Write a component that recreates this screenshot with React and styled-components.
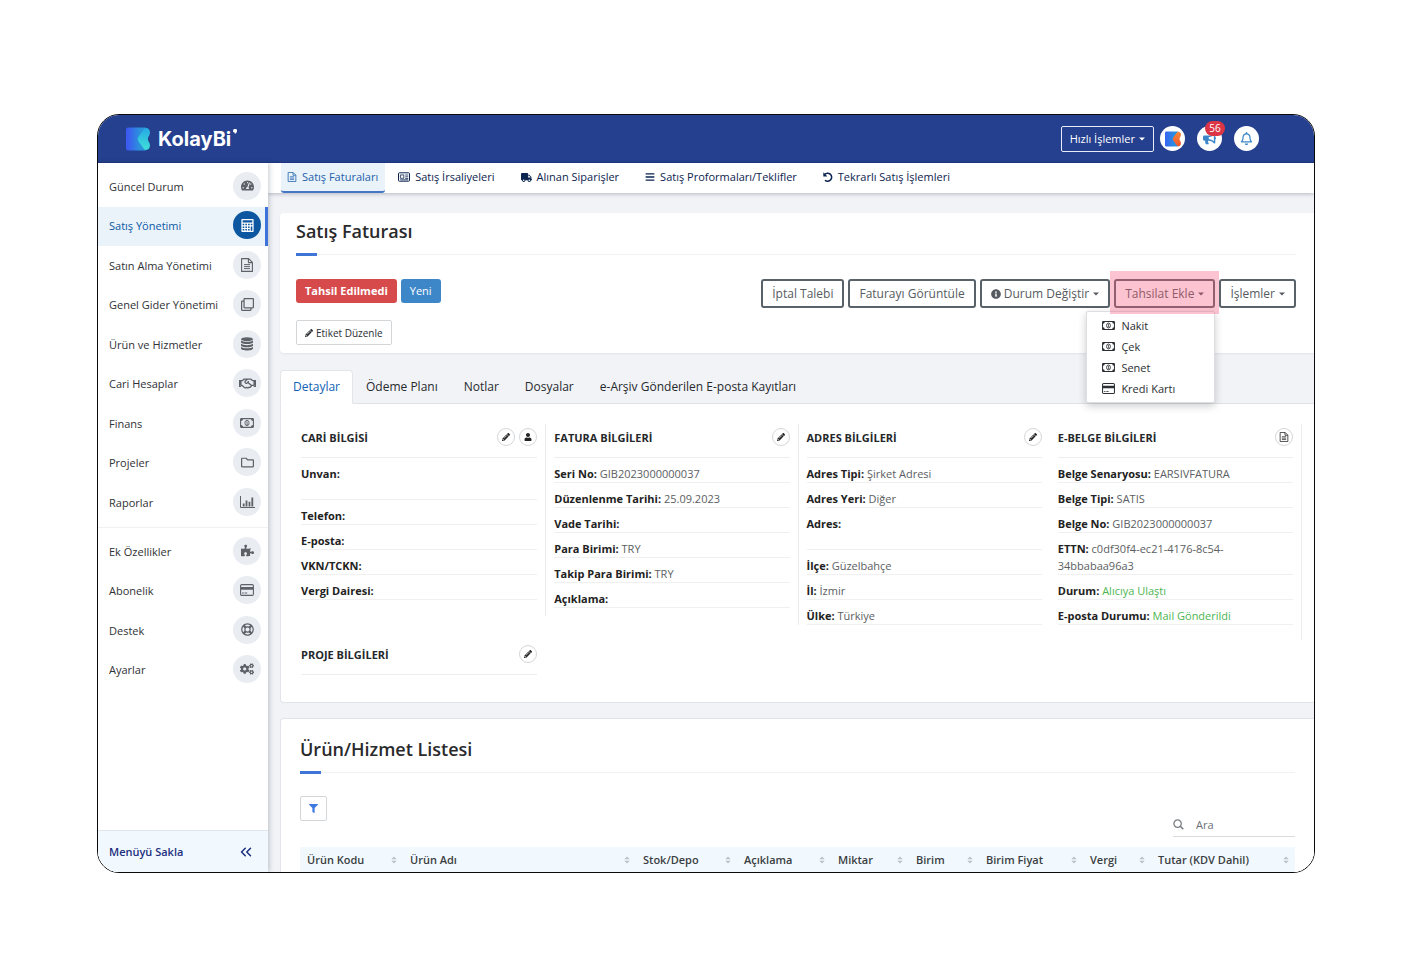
import React from "react";
import styled, { createGlobalStyle, css } from "styled-components";
import {
  FaTachometerAlt, FaRegClone, FaRegHandshake, FaRegFolder,
  FaPuzzlePiece, FaRegLifeRing, FaCogs, FaTruck, FaBars, FaInfoCircle,
  FaBullhorn, FaRegBell, FaFilter, FaPencilAlt, FaUser,
} from "react-icons/fa";
import { ChevronsLeft } from "lucide-react";

const GlobalStyle = createGlobalStyle`
  *, *::before, *::after { box-sizing: border-box; }
  body { margin: 0; background: #fff; color: #2b2f33; font: 11px/16px "Open Sans", "Noto Sans", sans-serif; }
  button, input { font: inherit; color: inherit; }
  button { cursor: pointer; }
  a { color: inherit; text-decoration: none; }
  h1, h2, h3, p, ul, dl, dd, dt { margin: 0; padding: 0; }
  ul { list-style: none; }
  svg { display: block; flex: none; }
`;

/* ---------- drawings ---------- */

const Money = ({ size = 14 }) => (
  <svg width={size} height={size} viewBox="0 0 14 14" aria-hidden="true">
    <rect x="0.6" y="2.6" width="12.8" height="8.8" rx="0.6" fill="none" stroke="currentColor" strokeWidth="1.1" />
    <path fill="currentColor" d="M1 3h2a2 2 0 0 1-2 2zM13 3h-2a2 2 0 0 0 2 2zM1 11h2a2 2 0 0 0-2-2zM13 11h-2a2 2 0 0 1 2-2z" />
    <ellipse cx="7" cy="7" rx="2.1" ry="2.7" fill="none" stroke="currentColor" strokeWidth="0.9" />
    <path d="M6.3 6.1L7.1 5.5V8.3M6.3 8.4H7.9" fill="none" stroke="currentColor" strokeWidth="0.8" />
  </svg>
);

const Card = ({ size = 14 }) => (
  <svg width={size} height={size} viewBox="0 0 14 14" aria-hidden="true">
    <rect x="0.6" y="1.6" width="12.8" height="10.8" rx="1.2" fill="none" stroke="currentColor" strokeWidth="1.1" />
    <path fill="currentColor" d="M0.6 4h12.8v2.8H0.6zM2 9.6h1.8v1H2zM4.6 9.6h2.6v1H4.6z" />
  </svg>
);

const Calculator = ({ size = 14 }) => (
  <svg width={size} height={size} viewBox="0 0 14 14" aria-hidden="true">
    <path
      fill="currentColor"
      fillRule="evenodd"
      d="M1.2 0h11.6a.8.8 0 0 1 .8.8v12.4a.8.8 0 0 1-.8.8H1.2a.8.8 0 0 1-.8-.8V.8a.8.8 0 0 1 .8-.8zM1.8 1.4v2.4h10.4V1.4zM1.8 5.2v1.6h1.7V5.2zM4.7 5.2v1.6h1.7V5.2zM7.6 5.2v1.6h1.7V5.2zM10.5 5.2v1.6h1.7V5.2zM1.8 8v1.6h1.7V8zM4.7 8v1.6h1.7V8zM7.6 8v1.6h1.7V8zM10.5 8v4.6h1.7V8zM1.8 10.9v1.6h1.7v-1.6zM4.7 10.9v1.6h1.7v-1.6zM7.6 10.9v1.6h1.7v-1.6z"
    />
  </svg>
);

const FileText = ({ size = 13 }) => (
  <svg width={size} height={size} viewBox="0 0 14 14" aria-hidden="true">
    <path d="M1.6 0.6H8.6L12.4 4.4V13.4H1.6zM8.4 0.8V4.6H12.2" fill="none" stroke="currentColor" strokeWidth="1.1" strokeLinejoin="round" />
    <path d="M4 6.6H10M4 8.6H10M4 10.6H10" stroke="currentColor" strokeWidth="1" />
  </svg>
);

const Database = ({ size = 14 }) => (
  <svg width={size} height={size} viewBox="0 0 14 14" aria-hidden="true">
    <ellipse cx="7" cy="2.2" rx="6" ry="2" fill="currentColor" />
    <path
      fill="currentColor"
      d="M1 3.6C3 5.4 11 5.4 13 3.6V5.2C13 7.6 1 7.6 1 5.2zM1 6.8C3 8.6 11 8.6 13 6.8V8.4C13 10.8 1 10.8 1 8.4zM1 10C3 11.8 11 11.8 13 10V11.6C13 14.2 1 14.2 1 11.6z"
    />
  </svg>
);

const Chart = ({ size = 14 }) => (
  <svg width={size + 1} height={size} viewBox="0 0 15 14" aria-hidden="true">
    <path d="M0.5 1V12.5H15" fill="none" stroke="currentColor" />
    <path fill="currentColor" d="M2.8 8.4h1.8V11.4H2.8zM5.6 5.4h1.8v6H5.6zM8.6 6.8h1.8v4.6H8.6zM11.4 2.4h1.8v9h-1.8z" />
  </svg>
);

const IdCard = () => (
  <svg width="12" height="10" viewBox="0 0 12 10" aria-hidden="true">
    <rect x="0.5" y="0.8" width="11" height="8.4" rx="0.8" fill="none" stroke="currentColor" />
    <path d="M2.4 2.9h3.4v3.4H2.4zM7.2 3h3M7.2 4.8h3M7.2 6.5h3M2.2 7.8h8" fill="none" stroke="currentColor" strokeWidth="0.8" />
  </svg>
);

const Undo = () => (
  <svg width="10" height="10" viewBox="0 0 10 10" aria-hidden="true">
    <path d="M1.6 2.6A4 4 0 1 1 2 8.2" fill="none" stroke="currentColor" strokeWidth="1.5" />
    <path fill="currentColor" d="M0.3 0.3V4.4H4.4z" />
  </svg>
);

const Search = () => (
  <svg width="11" height="11" viewBox="0 0 11 11" aria-hidden="true">
    <circle cx="4.6" cy="4.6" r="3.7" fill="none" stroke="currentColor" strokeWidth="1.3" />
    <path d="M7.4 7.4L10.3 10.3" stroke="currentColor" strokeWidth="1.5" />
  </svg>
);

const CaretMark = styled.svg`
  margin-left: 1px;
`;

const Caret = () => (
  <CaretMark width="6" height="4" viewBox="0 0 6 4" aria-hidden="true">
    <path d="M0 0.4H6L3 3.6z" fill="currentColor" />
  </CaretMark>
);

const SortMark = () => (
  <svg width="6" height="8" viewBox="0 0 6 8" aria-hidden="true">
    <path d="M0.3 3.2L3 0.4L5.7 3.2zM0.3 4.8L3 7.6L5.7 4.8z" fill="#b9c1ca" />
  </svg>
);

const LogoMark = ({ id, size, from, to, wing, wingEnd }) => (
  <svg width={size} height={size} viewBox="0 0 24 24" aria-hidden="true">
    <defs>
      <linearGradient id={id}>
        <stop offset="0.1" stopColor={from} />
        <stop offset="0.7" stopColor={to} />
      </linearGradient>
      <linearGradient id={`${id}-wing`} x1="0" y1="1" x2="0" y2="0">
        <stop offset="0" stopColor={wing} />
        <stop offset="1" stopColor={wingEnd} />
      </linearGradient>
    </defs>
    <path d="M2 0.6H20L12 12L20 23.4H2A2 2 0 0 1 0 21.4V2.6A2 2 0 0 1 2 0.6z" fill={`url(#${id})`} />
    <path
      d="M18.6 1.4C21.4 0.2 24 2.4 24 5.4C24 8.6 21.8 9.6 21.8 12C21.8 14.4 24 15.4 24 18.6C24 21.8 21.2 23.8 18.4 22.6L12.4 14.2Q10.8 12 12.4 9.8z"
      fill={`url(#${id}-wing)`}
    />
  </svg>
);

/* ---------- frame ---------- */

const Page = styled.div`
  min-height: 100vh;
  padding: 114px 97px 87px;
`;

const Window = styled.div`
  border: 1px solid #0b0b0d;
  border-radius: 22px;
  overflow: hidden;
  background: #fff;
`;

const TopBar = styled.header`
  display: flex;
  align-items: center;
  justify-content: space-between;
  height: 48px;
  padding: 0 55px 0 28px;
  background: #24408e;
  border-bottom: 1px solid #1b3582;
  color: #fff;
`;

const Brand = styled.a`
  display: flex;
  align-items: center;
  gap: 8px;
  font: 700 20px/24px Inter, "Open Sans", sans-serif;
`;

const BrandName = styled.span`
  display: flex;
  gap: 1px;
`;

const BrandDot = styled.svg`
  margin-top: 2px;
`;

const TopActions = styled.div`
  display: flex;
  align-items: center;
`;

const QuickButton = styled.button`
  display: flex;
  align-items: center;
  gap: 3px;
  height: 26px;
  margin-right: 6px;
  padding: 0 8px;
  border: 1px solid #e7ecf8;
  border-radius: 2px;
  background: transparent;
  font-weight: 500;
`;

const RoundButton = styled.button`
  position: relative;
  display: grid;
  place-items: center;
  width: 25px;
  height: 25px;
  margin-right: 12px;
  padding: 0;
  border: 0;
  border-radius: 50%;
  background: #fff;
  color: #3d87c8;
  &:last-child { margin-right: 0; }
`;

const Count = styled.span`
  position: absolute;
  top: -5px;
  left: 8px;
  width: 20px;
  border-radius: 8px;
  background: #dc3545;
  color: #fff;
  font-size: 10px;
  line-height: 15px;
`;

const Body = styled.div`
  display: flex;
  background: #f1f3f7;
`;

/* ---------- side menu ---------- */

const Sidebar = styled.aside`
  position: relative;
  display: flex;
  flex: none;
  flex-direction: column;
  width: 170px;
  padding-top: 4px;
  background: #fff;
  box-shadow: 1px 0 5px rgba(40, 50, 70, 0.28);
`;

const Menu = styled.ul`
  display: flex;
  flex-direction: column;
  height: ${(p) => p.$height}px;
  & + & {
    margin-top: 4px;
    padding-top: 4px;
    border-top: 1px solid #f0f1f3;
  }
`;

const MenuItem = styled.li`
  flex: 1;
`;

const MenuLink = styled.a`
  display: flex;
  align-items: center;
  justify-content: space-between;
  height: 39px;
  padding: 0 7px 0 11px;
  color: #2f3236;
  font-weight: 500;
  ${(p) => p.$active && css`
    padding-right: 4px;
    border-right: 3px solid #3f73dc;
    background: #e9f3f9;
    color: #0b58a6;
  `}
`;

const MenuIcon = styled.span`
  display: grid;
  place-items: center;
  width: 28px;
  height: 28px;
  margin-bottom: 2px;
  border-radius: 50%;
  background: ${(p) => (p.$active ? "#0c57a0" : "#e9edf2")};
  color: ${(p) => (p.$active ? "#fff" : "#5c6268")};
`;

const HideMenu = styled.button`
  display: flex;
  align-items: center;
  justify-content: space-between;
  height: 42px;
  margin-top: auto;
  padding: 0 13px 0 11px;
  border: 0;
  border-top: 1px solid #dfe5ea;
  background: #f2f9fe;
  color: #1c2f80;
  font-weight: 600;
`;

/* ---------- main area ---------- */

const Main = styled.main`
  flex: 1;
  min-width: 0;
`;

const SubNav = styled.nav`
  display: flex;
  height: 30px;
  padding-left: 13px;
  background: #fff;
  box-shadow: 0 1px 4px rgba(40, 50, 70, 0.3);
`;

const SubNavLink = styled.a`
  display: flex;
  align-items: center;
  gap: 5px;
  height: 30px;
  padding: 0 13px;
  border-bottom: 2px solid transparent;
  color: #0c2450;
  font-weight: 500;
  ${(p) => p.$active && css`
    padding: 0 7px 0 6px;
    border-bottom-color: #4577c4;
    border-radius: 0 0 3px 3px;
    background: #e9f3f9;
    color: #1f5fac;
  `}
`;

const Content = styled.div`
  padding: 20px 0 0 12px;
`;

const Panel = styled.section`
  border-radius: 4px 0 0 4px;
  background: #fff;
`;

const SummaryPanel = styled(Panel)`
  padding: 6px 18px 8px 16px;
  box-shadow: 0 1px 2px rgba(40, 50, 70, 0.08);
`;

const Title = styled.h1`
  color: #2a2a2c;
  font-size: 18px;
  font-weight: 600;
  line-height: 24px;
`;

const TitleRule = styled.div`
  height: 3px;
  margin-top: 10px;
  background:
    linear-gradient(#4075d8, #4075d8) 0 0 / 21px 3px no-repeat,
    linear-gradient(#f1f1f3, #f1f1f3) 0 1px / 100% 1px no-repeat;
`;

const ActionRow = styled.div`
  display: flex;
  justify-content: space-between;
  margin: 23px 0 12px;
`;

const Group = styled.div`
  display: flex;
  align-items: flex-start;
  gap: 4px;
`;

const Badge = styled.span`
  padding: 0 9px;
  border-radius: 3px;
  background: ${(p) => (p.$tone === "danger" ? "#d64a4b" : "#3d86c8")};
  color: #fff;
  font-weight: ${(p) => (p.$tone === "danger" ? 700 : 500)};
  line-height: 24px;
`;

const ActionButton = styled.button`
  display: flex;
  align-items: center;
  gap: 3px;
  height: 29px;
  padding: 0 9px;
  border: 2px solid #5a6269;
  border-radius: 3px;
  background: #fff;
  color: #565b61;
  font-size: 12px;
`;

const Dropdown = styled.div`
  position: relative;
`;

const Highlight = styled.span`
  position: absolute;
  inset: -8px -4px -6px;
  background: rgba(244, 92, 124, 0.36);
  pointer-events: none;
`;

const DropdownMenu = styled.ul`
  position: absolute;
  top: 32px;
  right: 0;
  width: 129px;
  padding: 3px 0;
  border: 1px solid #dcdee1;
  border-radius: 2px;
  background: #fff;
  box-shadow: 0 3px 8px rgba(0, 0, 0, 0.2);
`;

const DropdownItem = styled.button`
  display: flex;
  align-items: center;
  gap: 6px;
  width: 100%;
  height: 21px;
  padding: 0 15px;
  border: 0;
  background: none;
  font-weight: 500;
`;

const SmallButton = styled.button`
  display: flex;
  align-items: center;
  justify-content: center;
  gap: 3px;
  height: 25px;
  padding: 0 8px;
  border: 1px solid #d3d6d9;
  border-radius: 2px;
  background: #fff;
  font-size: 10px;
  font-weight: 500;
`;

const FilterButton = styled(SmallButton)`
  width: 27px;
  padding: 0;
  color: #3d7ae0;
`;

const Tabs = styled.div`
  display: flex;
  margin-top: 17px;
`;

const Tab = styled.button`
  height: 34px;
  padding: 0 13px;
  border: 0;
  border-bottom: 1px solid #dfe2e6;
  background: none;
  color: #26292c;
  font-size: 12px;
  ${(p) => p.$active && css`
    padding: 0 12px;
    border: 1px solid #e3e5e9;
    border-bottom-color: #fff;
    border-radius: 4px 4px 0 0;
    background: #fff;
    color: #0f62b4;
  `}
`;

const TabsRest = styled.div`
  flex: 1;
  border-bottom: 1px solid #dfe2e6;
`;

const DetailPanel = styled.section`
  display: grid;
  grid-template-columns: repeat(4, 1fr);
  row-gap: 1px;
  align-items: start;
  padding: 20px 12px 27px;
  border: 1px solid #e1e4e8;
  border-width: 0 0 1px 1px;
  border-radius: 0 0 0 4px;
  background: #fff;
`;

const InfoColumn = styled.section`
  padding: 0 8px ${(p) => p.$tail || 0}px;
  border: solid #ececef;
  border-width: 0 ${(p) => (p.$edge === "right" ? 1 : 0)}px 0 ${(p) => (p.$edge === "left" ? 1 : 0)}px;
`;

const InfoHead = styled.header`
  display: flex;
  align-items: flex-start;
  gap: 4px;
  height: 34px;
  padding-top: 4px;
  border-bottom: 1px solid #ededf0;
`;

const InfoTitle = styled.h2`
  flex: 1;
  color: #25282b;
  font-size: 11px;
  font-weight: 700;
  line-height: 20px;
`;

const CircleButton = styled.button`
  display: grid;
  place-items: center;
  width: 18px;
  height: 18px;
  padding: 0;
  border: 1px solid #d4d6d9;
  border-radius: 50%;
  background: #fff;
  color: #222;
`;

const InfoRow = styled.div`
  min-height: ${(p) => (p.$tall ? 42 : 25)}px;
  padding-top: 7px;
  border-bottom: 1px solid #f0f0f2;
  line-height: 17px;
`;

const Label = styled.dt`
  display: inline;
  color: #222;
  font-weight: 700;
`;

const Value = styled.dd`
  display: inline;
  color: ${(p) => (p.$ok ? "#4db551" : "#5b5e62")};
`;

const ListPanel = styled(Panel)`
  margin-top: 15px;
  padding: 18px 19px 0;
  border: 1px solid #e1e4e8;
  border-width: 1px 0 0 1px;
  border-radius: 4px 0 0 0;
`;

const ListTools = styled.div`
  display: flex;
  justify-content: space-between;
  height: 41px;
  margin: 22px 0 10px;
`;

const SearchBox = styled.label`
  display: flex;
  align-items: center;
  align-self: flex-end;
  gap: 12px;
  width: 122px;
  height: 24px;
  border-bottom: 1px solid #d9dbde;
  color: #7b7f84;
  input {
    width: 80px;
    padding: 0;
    border: 0;
    outline: 0;
    background: none;
  }
  input::placeholder { color: #6c7075; opacity: 1; }
`;

const Table = styled.table`
  width: 100%;
  table-layout: fixed;
  border-collapse: collapse;
  background: #f2f9fe;
`;

const HeadCell = styled.th`
  width: ${(p) => (p.$width ? `${p.$width}px` : "auto")};
  height: 25px;
  padding: 0 6px 0 7px;
  color: #3a3e42;
  font-weight: 600;
  text-align: left;
  white-space: nowrap;
`;

const HeadLabel = styled.span`
  display: flex;
  align-items: center;
  justify-content: space-between;
`;

/* ---------- data ---------- */

const mainMenu = [
  ["Güncel Durum", <FaTachometerAlt size={13} />],
  ["Satış Yönetimi", <Calculator size={13} />, true],
  ["Satın Alma Yönetimi", <FileText size={14} />],
  ["Genel Gider Yönetimi", <FaRegClone size={13} />],
  ["Ürün ve Hizmetler", <Database />],
  ["Cari Hesaplar", <FaRegHandshake size={17} />],
  ["Finans", <Money />],
  ["Projeler", <FaRegFolder size={13} />],
  ["Raporlar", <Chart />],
];

const extraMenu = [
  ["Ek Özellikler", <FaPuzzlePiece size={13} />],
  ["Abonelik", <Card />],
  ["Destek", <FaRegLifeRing size={13} />],
  ["Ayarlar", <FaCogs size={14} />],
];

const subNav = [
  ["Satış Faturaları", <FileText size={10} />, true],
  ["Satış İrsaliyeleri", <IdCard />],
  ["Alınan Siparişler", <FaTruck size={11} />],
  ["Satış Proformaları/Teklifler", <FaBars size={10} />],
  ["Tekrarlı Satış İşlemleri", <Undo />],
];

const payments = [
  ["Nakit", <Money size={13} />],
  ["Çek", <Money size={13} />],
  ["Senet", <Money size={13} />],
  ["Kredi Kartı", <Card size={13} />],
];

const edit = ["Düzenle", <FaPencilAlt size={8} />];

const infoColumns = [
  {
    title: "CARİ BİLGİSİ",
    buttons: [edit, ["Cari", <FaUser size={8} />]],
    rows: [
      { label: "Unvan:", tall: true },
      { label: "Telefon:" },
      { label: "E-posta:" },
      { label: "VKN/TCKN:" },
      { label: "Vergi Dairesi:" },
    ],
  },
  {
    title: "FATURA BİLGİLERİ",
    buttons: [edit],
    edge: "left",
    tail: 8,
    rows: [
      { label: "Seri No:", value: "GIB2023000000037" },
      { label: "Düzenlenme Tarihi:", value: "25.09.2023" },
      { label: "Vade Tarihi:" },
      { label: "Para Birimi:", value: "TRY" },
      { label: "Takip Para Birimi:", value: "TRY" },
      { label: "Açıklama:" },
    ],
  },
  {
    title: "ADRES BİLGİLERİ",
    buttons: [edit],
    edge: "left",
    rows: [
      { label: "Adres Tipi:", value: "Şirket Adresi" },
      { label: "Adres Yeri:", value: "Diğer" },
      { label: "Adres:", tall: true },
      { label: "İlçe:", value: "Güzelbahçe" },
      { label: "İl:", value: "İzmir" },
      { label: "Ülke:", value: "Türkiye" },
    ],
  },
  {
    title: "E-BELGE BİLGİLERİ",
    buttons: [["Belge", <FileText size={10} />]],
    edge: "right",
    tail: 15,
    rows: [
      { label: "Belge Senaryosu:", value: "EARSIVFATURA" },
      { label: "Belge Tipi:", value: "SATIS" },
      { label: "Belge No:", value: "GIB2023000000037" },
      { label: "ETTN:", value: "c0df30f4-ec21-4176-8c54-34bbabaa96a3", tall: true },
      { label: "Durum:", value: "Alıcıya Ulaştı", ok: true },
      { label: "E-posta Durumu:", value: "Mail Gönderildi", ok: true },
    ],
  },
  { title: "PROJE BİLGİLERİ", buttons: [edit], rows: [] },
];

const tableColumns = [
  ["Ürün Kodu", 103],
  ["Ürün Adı"],
  ["Stok/Depo", 101],
  ["Açıklama", 94],
  ["Miktar", 78],
  ["Birim", 70],
  ["Birim Fiyat", 104],
  ["Vergi", 68],
  ["Tutar (KDV Dahil)", 144],
];

/* ---------- composed parts ---------- */

const MenuList = ({ items, height }) => (
  <Menu $height={height}>
    {items.map(([label, icon, active]) => (
      <MenuItem key={label}>
        <MenuLink href="#" $active={active}>
          {label}
          <MenuIcon $active={active}>{icon}</MenuIcon>
        </MenuLink>
      </MenuItem>
    ))}
  </Menu>
);

const Info = ({ title, buttons, rows, edge, tail }) => (
  <InfoColumn $edge={edge} $tail={tail}>
    <InfoHead>
      <InfoTitle>{title}</InfoTitle>
      {buttons.map(([name, icon]) => (
        <CircleButton key={name} aria-label={name}>{icon}</CircleButton>
      ))}
    </InfoHead>
    {rows.length > 0 && (
      <dl>
        {rows.map((row) => (
          <InfoRow key={row.label} $tall={row.tall}>
            <Label>{row.label}</Label> <Value $ok={row.ok}>{row.value}</Value>
          </InfoRow>
        ))}
      </dl>
    )}
  </InfoColumn>
);

export default function App() {
  return (
    <Page>
      <GlobalStyle />
      <Window>
        <TopBar>
          <Brand href="#">
            <LogoMark id="brand" size={24} from="#3c5bf0" to="#2b93dc" wing="#3fe0d8" wingEnd="#27a9e6" />
            <BrandName>
              KolayBi
              <BrandDot width="6" height="8" viewBox="0 0 6 8" aria-hidden="true">
                <path d="M1.4 0.8A1.9 1.9 0 0 1 5 1.8C5 3.6 3.8 4.6 2.6 5.2L3 3.8A1.9 1.9 0 0 1 1.4 0.8z" fill="#fff" />
              </BrandDot>
            </BrandName>
          </Brand>
          <TopActions>
            <QuickButton>Hızlı İşlemler <Caret /></QuickButton>
            <RoundButton aria-label="Hesap">
              <LogoMark id="account" size={16} from="#3568f0" to="#2b8fe0" wing="#f0552b" wingEnd="#f58a3c" />
            </RoundButton>
            <RoundButton aria-label="Duyurular">
              <FaBullhorn size={13} />
              <Count>56</Count>
            </RoundButton>
            <RoundButton aria-label="Bildirimler"><FaRegBell size={13} /></RoundButton>
          </TopActions>
        </TopBar>
        <Body>
          <Sidebar>
            <MenuList items={mainMenu} height={356} />
            <MenuList items={extraMenu} height={163} />
            <HideMenu>Menüyü Sakla <ChevronsLeft size={18} strokeWidth={2} /></HideMenu>
          </Sidebar>
          <Main>
            <SubNav>
              {subNav.map(([label, icon, active]) => (
                <SubNavLink key={label} href="#" $active={active}>{icon}{label}</SubNavLink>
              ))}
            </SubNav>
            <Content>
              <SummaryPanel>
                <Title>Satış Faturası</Title>
                <TitleRule />
                <ActionRow>
                  <Group>
                    <Badge $tone="danger">Tahsil Edilmedi</Badge>
                    <Badge>Yeni</Badge>
                  </Group>
                  <Group>
                    <ActionButton>İptal Talebi</ActionButton>
                    <ActionButton>Faturayı Görüntüle</ActionButton>
                    <ActionButton><FaInfoCircle size={10} />Durum Değiştir <Caret /></ActionButton>
                    <Dropdown>
                      <ActionButton>Tahsilat Ekle <Caret /></ActionButton>
                      <DropdownMenu>
                        {payments.map(([label, icon]) => (
                          <li key={label}><DropdownItem>{icon}{label}</DropdownItem></li>
                        ))}
                      </DropdownMenu>
                      <Highlight />
                    </Dropdown>
                    <ActionButton>İşlemler <Caret /></ActionButton>
                  </Group>
                </ActionRow>
                <Group>
                  <SmallButton><FaPencilAlt size={8} />Etiket Düzenle</SmallButton>
                </Group>
              </SummaryPanel>

              <Tabs>
                <Tab $active>Detaylar</Tab>
                <Tab>Ödeme Planı</Tab>
                <Tab>Notlar</Tab>
                <Tab>Dosyalar</Tab>
                <Tab>e-Arşiv Gönderilen E-posta Kayıtları</Tab>
                <TabsRest />
              </Tabs>
              <DetailPanel>
                {infoColumns.map((column) => <Info key={column.title} {...column} />)}
              </DetailPanel>

              <ListPanel>
                <Title as="h2">Ürün/Hizmet Listesi</Title>
                <TitleRule />
                <ListTools>
                  <FilterButton aria-label="Filtrele"><FaFilter size={9} /></FilterButton>
                  <SearchBox>
                    <Search />
                    <input type="text" placeholder="Ara" aria-label="Ara" />
                  </SearchBox>
                </ListTools>
                <Table>
                  <thead>
                    <tr>
                      {tableColumns.map(([label, width]) => (
                        <HeadCell key={label} $width={width} scope="col">
                          <HeadLabel>{label}<SortMark /></HeadLabel>
                        </HeadCell>
                      ))}
                    </tr>
                  </thead>
                </Table>
              </ListPanel>
            </Content>
          </Main>
        </Body>
      </Window>
    </Page>
  );
}
